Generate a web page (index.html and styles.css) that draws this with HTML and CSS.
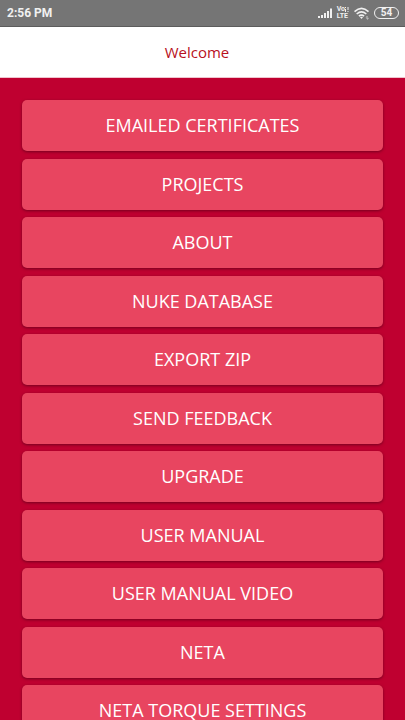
FILE: index.html
```html
<!DOCTYPE html>
<html lang="en">
<head>
<meta charset="utf-8">
<meta name="viewport" content="width=device-width, initial-scale=1">
<title>Welcome</title>
<link rel="stylesheet" href="styles.css">
</head>
<body>
<div class="status">
  <span class="clock">2:56 PM</span>
  <div class="indicators">
    <svg width="15" height="11" viewBox="0 0 15 11" aria-hidden="true">
      <path d="M0 8h2v2H0zM3 7h2v3H3zM6 5h2v5H6zM9 3h2v7H9zM12 0.500h2V10h-2z"/>
    </svg>
    <div class="volte">
      <span class="voice">Vo<svg width="4" height="5" viewBox="0 0 4 5" aria-hidden="true"><path d="M0 0h1v1H0zM0 2h1v3H0zM2.500 0h1v3h-1zM2.500 4h1v1h-1z"/></svg></span>
      <span>LTE</span>
    </div>
    <svg width="16" height="13" viewBox="0 0 16 13" aria-hidden="true">
      <g fill="none" stroke="currentColor" stroke-width="1.600">
        <path d="M0.500 4.600Q7.500-2 14.500 4.600"/>
        <path d="M2.700 7Q7.500 2.700 12.300 7"/>
        <path d="M4.900 9.200Q7.500 7 10.100 9.200"/>
      </g>
      <path d="M6 10.200Q7.500 9.200 9 10.200L7.500 12z"/>
      <path d="M11.500 10.500l1.500-1.500 1.500 1.500zM12 11.300h3L13.500 12.800z" opacity="0.700"/>
    </svg>
    <span class="battery">54</span>
  </div>
</div>
<header class="header"><h1>Welcome</h1></header>
<main class="content">
  <nav class="menu" aria-label="Main menu">
    <button type="button">EMAILED CERTIFICATES</button>
    <button type="button">PROJECTS</button>
    <button type="button">ABOUT</button>
    <button type="button">NUKE DATABASE</button>
    <button type="button">EXPORT ZIP</button>
    <button type="button">SEND FEEDBACK</button>
    <button type="button">UPGRADE</button>
    <button type="button">USER MANUAL</button>
    <button type="button">USER MANUAL VIDEO</button>
    <button type="button">NETA</button>
    <button type="button">NETA TORQUE SETTINGS</button>
  </nav>
</main>
</body>
</html>
```
FILE: styles.css
```css
* {
  box-sizing: border-box;
}

body {
  margin: 0;
  height: 100vh;
  display: flex;
  flex-direction: column;
  background: #bf0030;
  font-family: "Open Sans", "Noto Sans", sans-serif;
}

.status {
  flex: none;
  display: flex;
  align-items: center;
  justify-content: space-between;
  height: 27px;
  padding: 0 6px 0 7px;
  border-bottom: 1px solid #5c5c5c;
  background: #757575;
  color: #f0f0f0;
  font-family: Roboto, sans-serif;
}

.clock {
  font-size: 12px;
  font-weight: 700;
}

.indicators {
  display: flex;
  align-items: center;
  gap: 4px;
}

.indicators svg {
  display: block;
  fill: currentColor;
}

.volte {
  display: flex;
  flex-direction: column;
  font-size: 7px;
  line-height: 7px;
  font-weight: 700;
  padding-right: 1px;
}

.voice {
  display: flex;
  align-items: center;
}

.battery {
  width: 25px;
  height: 12px;
  border: 1px solid currentColor;
  border-radius: 6px;
  font-size: 10px;
  line-height: 10px;
  font-weight: 700;
  text-align: center;
}

.header {
  flex: none;
  padding: 13px 11px 13px 0;
  border-bottom: 1px solid #efc4ce;
  background: #fff;
  text-align: center;
}

.header h1 {
  margin: 0;
  color: #b8101c;
  font-size: 15px;
  line-height: 24px;
  font-weight: 400;
}

.content {
  flex: 1;
  min-height: 0;
  overflow-y: auto;
  scrollbar-width: none;
  padding: 22px;
}

.menu {
  display: flex;
  flex-direction: column;
  justify-content: space-between;
  min-height: 636px;
}

.menu button {
  padding: 12px;
  border: 0;
  border-radius: 5px;
  background: #e84560;
  box-shadow: 0 1px 3px rgba(70, 0, 20, 0.6);
  color: #fff;
  font-family: inherit;
  font-size: 18px;
  line-height: 27px;
}
```
